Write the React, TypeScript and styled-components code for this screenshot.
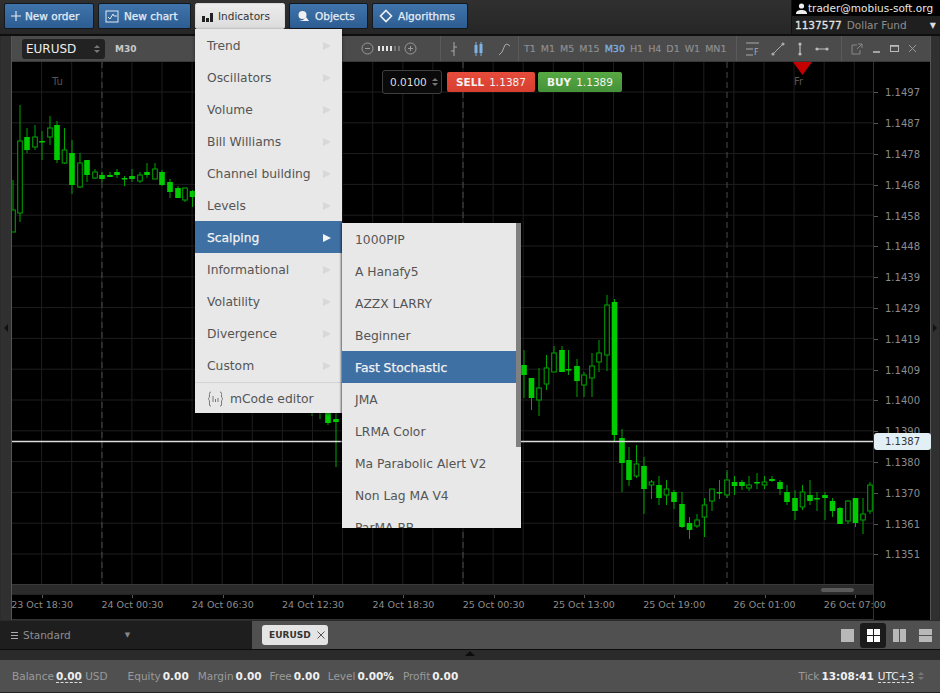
import React from "react";
import styled, { createGlobalStyle } from "styled-components";

const Global = createGlobalStyle`
  html, body { margin: 0; padding: 0; width: 940px; height: 693px; overflow: hidden; background: #333; }
  body, button { font-family: "DejaVu Sans", Verdana, sans-serif; }
  * { box-sizing: border-box; }
`;

const Page = styled.div`
  position: relative;
  width: 940px;
  height: 693px;
  display: flex;
  flex-direction: column;
  background: #2c2c2c;
`;

/* ---------- top bar ---------- */
const TopBar = styled.div`
  height: 36px;
  flex: none;
  display: flex;
  justify-content: space-between;
  background: linear-gradient(#303030, #262626);
  border-bottom: 2px solid #0e0e0e;
`;
const ToolGroup = styled.div`
  display: flex;
  gap: 4px;
  padding: 3px 0 0 4px;
`;
const ToolButton = styled.button<{ $w: number; $active?: boolean; $gap?: number }>`
  width: ${(p) => p.$w}px;
  height: 26px;
  padding: 0 0 0 6px;
  display: flex;
  align-items: center;
  gap: ${(p) => p.$gap ?? 5}px;
  font-size: 10.5px;
  font-weight: 400;
  -webkit-text-stroke: ${(p) => (p.$active ? "0" : "0.25px")};
  color: ${(p) => (p.$active ? "#333" : "#e4edf6")};
  background: ${(p) => (p.$active ? "linear-gradient(#ececec,#dcdcdc)" : "linear-gradient(#3f74ab,#2d5d92)")};
  border: 1px solid ${(p) => (p.$active ? "#d8d8d8" : "#12181f")};
  border-radius: 2px;
`;
const UserBox = styled.div`
  width: 149px;
  display: flex;
  flex-direction: column;
  background: #1f1f1f;
  border-left: 1px solid #111;
`;
const UserTop = styled.div`
  height: 16px;
  background: #000;
  color: #e8e8e8;
  font-size: 10.5px;
  display: flex;
  align-items: center;
  gap: 1px;
  padding-left: 4px;
  white-space: nowrap;
  font-weight: 400;
`;
const UserBottom = styled.div`
  flex: 1;
  display: flex;
  align-items: center;
  padding: 0 4px 0 3px;
  font-size: 10.5px;
  color: #8d8d8d;
  gap: 5px;
  white-space: nowrap;
`;
const UserId = styled.span`
  color: #e2e2e2;
  -webkit-text-stroke: 0.3px #e2e2e2;
`;
const Caret = styled.span`
  margin-left: auto;
  color: #ddd;
  font-size: 8px;
`;

/* ---------- main ---------- */
const Main = styled.div`
  flex: none;
  height: 584px;
  display: flex;
`;
const Rail = styled.div<{ $w: number }>`
  width: ${(p) => p.$w}px;
  flex: none;
  display: flex;
  align-items: center;
  justify-content: center;
  background: #303030;
  border-right: 1px solid ${(p) => (p.$w === 12 ? "#555" : "#2c2c2c")};
  border-left: 1px solid ${(p) => (p.$w === 12 ? "#2c2c2c" : "#555")};
`;
const RailArrow = styled.div<{ $left?: boolean }>`
  width: 0;
  height: 0;
  border-top: 4px solid transparent;
  border-bottom: 4px solid transparent;
  ${(p) => (p.$left ? "border-right: 4px solid #111;" : "border-left: 4px solid #111;")}
`;
const ChartWindow = styled.div`
  flex: 1;
  display: flex;
  flex-direction: column;
  background: #000;
  min-width: 0;
`;
const TitleBar = styled.div`
  height: 26px;
  flex: none;
  display: flex;
  align-items: center;
  background: #4b4b4b;
  border-bottom: 1px solid #3a3a3a;
`;
const SymbolSelect = styled.div`
  margin-left: 10px;
  width: 83px;
  height: 20px;
  flex: none;
  background: #222;
  border-radius: 3px;
  color: #eee;
  font-size: 12px;
  font-weight: 400;
  display: flex;
  align-items: center;
  justify-content: space-between;
  padding: 0 5px 0 4px;
`;
const Spin = styled.span`
  display: flex;
  flex-direction: column;
  gap: 2px;
  &::before, &::after {
    content: "";
    width: 0;
    height: 0;
    border-left: 3px solid transparent;
    border-right: 3px solid transparent;
  }
  &::before { border-bottom: 3px solid #777; }
  &::after { border-top: 3px solid #777; }
`;
const TfLabel = styled.span`
  margin-left: 10px;
  font-size: 9px;
  font-weight: 700;
  color: #c9c9c9;
  width: 246px;
  flex: none;
`;
const ZoomControls = styled.div`
  width: 79px;
  display: flex;
  align-items: center;
  gap: 4px;
  flex: none;
`;
const ZoomTick = styled.i<{ $on: boolean }>`
  width: 2px;
  height: 5px;
  background: ${(p) => (p.$on ? "#e4e4e4" : "#777")};
`;
const ZoomTicks = styled.div`
  display: flex;
  gap: 2px;
`;
const Section = styled.div<{ $w: number; $gap?: number; $pad?: number }>`
  width: ${(p) => p.$w}px;
  flex: none;
  height: 25px;
  display: flex;
  align-items: center;
  gap: ${(p) => p.$gap ?? 0}px;
  padding-left: ${(p) => p.$pad ?? 0}px;
  border-left: 1px solid #5a5a5a;
`;
const Tf = styled.span<{ $active?: boolean }>`
  font-size: 9.5px;
  color: ${(p) => (p.$active ? "#7fb1e3" : "#8f8f8f")};
  -webkit-text-stroke: ${(p) => (p.$active ? "0.3px" : "0.15px")};
`;
const ChartGrid = styled.div`
  flex: 1;
  display: grid;
  grid-template-columns: 861px 57px;
  grid-template-rows: 522px 10px 1fr;
  min-height: 0;
`;
const Plot = styled.div`
  position: relative;
  grid-column: 1;
  grid-row: 1;
  background: #000;
  overflow: hidden;
`;
const PriceAxis = styled.div`
  grid-column: 2;
  grid-row: 1 / span 3;
  background: #000;
  border-left: 1px solid #333;
  position: relative;
  padding-top: 15.5px;
  display: flex;
  flex-direction: column;
`;
const PriceRow = styled.div`
  height: 30.8px;
  flex: none;
  display: flex;
  align-items: center;
  padding-left: 11px;
  font-size: 10px;
  color: #8c8c8c;
  &::before {
    content: "";
    position: absolute;
    left: 0;
    width: 4px;
    height: 1px;
    background: #555;
  }
`;
const PriceTag = styled.div`
  position: absolute;
  left: 0;
  top: 371px;
  width: 57px;
  height: 17px;
  border-radius: 3px;
  background: #e2f0f6;
  color: #333;
  font-size: 10px;
  display: flex;
  align-items: center;
  padding-left: 11px;
`;
const ScrollTrack = styled.div`
  grid-column: 1;
  grid-row: 2;
  background: #2b2b2b;
  border-top: 1px solid #3a3a3a;
  display: flex;
  align-items: center;
  justify-content: flex-end;
  padding-right: 19px;
`;
const ScrollThumb = styled.div`
  width: 33px;
  height: 4px;
  border-radius: 2px;
  background: #5b5b5b;
`;
const TimeAxis = styled.div`
  grid-column: 1;
  grid-row: 3;
  position: relative;
  z-index: 1;
  display: flex;
  gap: 30px;
  background: #000;
  border-top: 1px solid #222;
  border-bottom: 1px solid #333;
`;
const TimeLabel = styled.div`
  width: 60.3px;
  flex: none;
  display: flex;
  justify-content: center;
  font-size: 9.5px;
  color: #8c8c8c;
  padding-top: 4px;
  white-space: nowrap;
  position: relative;
  &::before {
    content: "";
    position: absolute;
    top: 0;
    left: 50%;
    width: 1px;
    height: 3px;
    background: #555;
  }
`;
const DayLabel = styled.span<{ $x: number }>`
  position: absolute;
  left: ${(p) => p.$x}px;
  top: 14px;
  font-size: 10px;
  color: #555;
`;
const OrderPanel = styled.div`
  position: absolute;
  left: 370px;
  top: 8px;
  display: flex;
  align-items: center;
  gap: 5px;
`;
const Lots = styled.div`
  width: 60px;
  height: 24px;
  background: #0a0a0a;
  border: 1px solid #3f3f3f;
  border-radius: 3px;
  color: #ddd;
  font-size: 10.5px;
  display: flex;
  align-items: center;
  justify-content: space-between;
  padding: 0 3px 0 7px;
`;
const TradeButton = styled.button<{ $w: number; $buy?: boolean }>`
  width: ${(p) => p.$w}px;
  height: 20px;
  margin-right: ${(p) => (p.$buy ? 0 : -2)}px;
  border: none;
  border-radius: 2px;
  padding: 0;
  font-size: 10.5px;
  color: #f2f2f2;
  white-space: nowrap;
  background: ${(p) => (p.$buy ? "linear-gradient(#57a943,#45923a)" : "linear-gradient(#e64c3b,#d63e2f)")};
`;
const TradeSide = styled.b`
  margin-right: 5px;
`;

/* ---------- bottom ---------- */
const TabsRow = styled.div`
  flex: none;
  height: 30px;
  display: flex;
  background: #505050;
  border-top: 1px solid #2a2a2a;
  border-bottom: 1px solid #0c0c0c;
`;
const Workspace = styled.div`
  width: 252px;
  background: #1e1e1e;
  color: #8e8e8e;
  font-size: 10.5px;
  display: flex;
  align-items: center;
  padding-left: 11px;
  gap: 5px;
`;
const WsCaret = styled.span`
  margin-left: 49px;
  font-size: 7px;
  color: #888;
`;
const Burger = styled.span`
  width: 7px;
  height: 7px;
  border-top: 1px solid #aaa;
  border-bottom: 1px solid #aaa;
  position: relative;
  &::after {
    content: "";
    position: absolute;
    left: 0;
    right: 0;
    top: 2px;
    height: 1px;
    background: #aaa;
  }
`;
const Tab = styled.div`
  margin: 4px 0 0 10px;
  width: 66px;
  height: 20px;
  background: #e4e4e4;
  border-radius: 3px;
  color: #333;
  font-size: 9px;
  font-weight: 700;
  display: flex;
  align-items: center;
  gap: 6px;
  padding-left: 7px;
`;
const Layouts = styled.div`
  margin-left: auto;
  display: flex;
  align-items: center;
  padding-right: 2px;
`;
const LayoutBtn = styled.div<{ $active?: boolean }>`
  width: 26px;
  height: 25px;
  display: flex;
  align-items: center;
  justify-content: center;
  border-radius: 3px;
  background: ${(p) => (p.$active ? "#1b1b1b" : "transparent")};
`;
const Splitter = styled.div`
  flex: none;
  height: 10px;
  background: #2a2a2a;
  display: flex;
  justify-content: center;
`;
const SplitArrow = styled.div`
  margin-top: 1px;
  width: 0;
  height: 0;
  border-left: 5px solid transparent;
  border-right: 5px solid transparent;
  border-bottom: 5px solid #0c0c0c;
`;
const StatusBar = styled.div`
  flex: none;
  height: 33px;
  display: flex;
  align-items: center;
  padding: 0 0 0 12px;
  background: #505050;
  border-bottom: 1px solid #222;
  font-size: 10.5px;
  color: #9a9a9a;
  white-space: nowrap;
`;
const Stat = styled.span<{ $ml?: number }>`
  margin-left: ${(p) => p.$ml ?? 0}px;
`;
const StatValue = styled.b`
  color: #f0f0f0;
  margin-left: 2px;
`;
const Dotted = styled.span`
  border-bottom: 1px dashed #ddd;
  color: #eee;
`;
const Right = styled.div`
  margin-left: auto;
  display: flex;
  align-items: center;
  gap: 4px;
  padding-right: 16px;
`;

/* ---------- menus ---------- */
const Menu = styled.div`
  position: absolute;
  left: 195px;
  top: 29px;
  width: 147px;
  height: 384px;
  background: #e8e8e8;
  box-shadow: 0 1px 3px rgba(0, 0, 0, 0.5);
`;
const MenuItem = styled.div<{ $active?: boolean }>`
  height: 32px;
  display: flex;
  align-items: center;
  justify-content: space-between;
  padding: 1px 11px 0 12px;
  font-size: 12.3px;
  color: ${(p) => (p.$active ? "#f2f2f2" : "#555")};
  -webkit-text-stroke: ${(p) => (p.$active ? "0.25px" : "0")};
  background: ${(p) => (p.$active ? "#3f70a4" : "transparent")};
`;
const Arrow = styled.span<{ $active?: boolean }>`
  width: 0;
  height: 0;
  border-top: 4px solid transparent;
  border-bottom: 4px solid transparent;
  border-left: 8px solid ${(p) => (p.$active ? "#f4f4f4" : "#d8d8d8")};
`;
const EditorItem = styled.div`
  height: 32px;
  margin-top: 1px;
  border-top: 1px solid #d4d4d4;
  display: flex;
  align-items: center;
  gap: 6px;
  padding-left: 12px;
  font-size: 12.3px;
  color: #555;
`;
const SubMenu = styled.div`
  position: absolute;
  left: 342px;
  top: 223px;
  width: 179px;
  height: 305px;
  background: #e8e8e8;
  overflow: hidden;
  box-shadow: -1px 0 2px rgba(0, 0, 0, 0.6);
`;
const SubThumb = styled.div`
  position: absolute;
  right: 0;
  top: 0;
  width: 5px;
  height: 224px;
  background: #808080;
`;
const SubItem = styled(MenuItem)`
  padding-left: 13px;
`;

const candles: [number, number, number, number, number, number][] = [
  [13,180,232,210,232,0],[20,105,222,141,213,0],[27,128,153,137,150,1],[35,125,150,137,147,0],[42,131,160,141,142,1],[50,116,145,128,137,0],[57,121,163,125,160,1],[64.5,128,164,150,163,0],[72,140,194,153,185,1],[80,153,188,163,187,0],[87,160,182,160,175,1],[95,169,179,172,178,0],[102,172,182,175,179,1],[110,172,177,175,177,1],[117,169,178,172,175,1],[124.5,176,186,178,179,1],[132,169,182,176,179,1],[140,172,183,175,181,0],[147,163,178,172,175,1],[155,163,178,169,179,0],[162,170,186,172,185,1],[170,179,198,182,192,1],[178,186,198,188,198,1],[185,188,202,188,200,0],[192.5,190,207,191,197,1],
  [312,400,416,405,410,1],[320,400,419,405,411,1],[328,400,425,405,423,1],[336,410,467,419,422,1],
  [524,350,398,365,375,1],[531.5,378,410,378,398,1],[539,368,416,388,400,0],[546.5,355,390,368,384,0],[554,346,372,353,372,0],[562,346,372,350,372,1],[568.5,350,375,369,370,1],[577,359,397,366,381,1],[584,372,397,375,385,0],[592,353,397,366,378,0],[599,340,372,353,362,0],[607,295,371,305,355,0],[614.5,299,442,302,435,1],[622,429,492,438,463,1],[629,447,486,460,480,1],[636.5,445,478,464,476,0],[644,457,514,466,489,1],[651.5,480,499,482,485,0],[659,476,505,485,498,1],[666.5,480,505,489,495,0],[674,490,509,492,502,1],[682,492,528,504,527,1],[689.5,517,539,523,530,1],[697,514,528,520,526,0],[704.5,498,537,505,517,0],[712,489,511,489,501,0],[719.5,480,499,492,493,1],[727,470,498,480,495,0],[734.5,476,495,482,486,1],[742,480,490,482,486,1],[749,476,491,485,488,0],[757,473,489,482,483,1],[764.5,476,489,482,485,0],[772,476,482,479,481,1],[780,480,495,482,489,1],[787,485,505,492,502,1],[795,490,520,498,511,1],[802.5,485,510,492,507,0],[810,480,505,495,501,1],[817,492,511,498,499,1],[825,492,520,495,498,1],[832.5,498,517,501,511,1],[840,507,524,508,524,1],[848,500,524,501,521,0],[855.5,498,527,498,523,1],[863,498,534,514,520,0],[870,482,514,485,511,0],
];

const vLines = Array.from({ length: 28 }, (_, i) => 41.6 + i * 30.1);
const hLines = Array.from({ length: 17 }, (_, i) => 92 + i * 30.8);
const dashed = [102, 463, 727];

const ChartDrawing = () => (
  <svg width="861" height="522" viewBox="12 62 861 522" style={{ display: "block" }}>
    {vLines.map((x) => (
      <line key={x} x1={x} x2={x} y1="62" y2="584" stroke="#1e1e1e" />
    ))}
    {hLines.map((y) => (
      <line key={y} x1="12" x2="873" y1={y} y2={y} stroke="#1e1e1e" />
    ))}
    {dashed.map((x) => (
      <line key={x} x1={x} x2={x} y1="62" y2="584" stroke="#4a4a4a" strokeDasharray="6 4" />
    ))}
    {candles.map(([x, wt, wb, bt, bb, f]) => (
      <g key={x}>
        <line x1={x} x2={x} y1={wt} y2={wb} stroke="#00a400" />
        {f ? (
          <rect x={x - 2.8} y={bt} width={5.6} height={Math.max(bb - bt, 1.5)} fill="#00cc00" />
        ) : (
          <rect x={x - 2.3} y={bt} width={4.6} height={bb - bt} fill="#000" stroke="#009a00" strokeWidth="1.1" />
        )}
      </g>
    ))}
    <line x1="12" x2="873" y1="441.5" y2="441.5" stroke="#dcdcdc" strokeWidth="1.6" />
    <polygon points="793,62 812,62 802.5,75" fill="#c40000" />
  </svg>
);

const Ico = { stroke: "#9a9a9a", fill: "none" };
const prices = ["1.1497","1.1487","1.1478","1.1468","1.1458","1.1448","1.1439","1.1429","1.1419","1.1409","1.1400","1.1390","1.1380","1.1370","1.1361","1.1351"];
const times = ["23 Oct 18:30","24 Oct 00:30","24 Oct 06:30","24 Oct 12:30","24 Oct 18:30","25 Oct 00:30","25 Oct 13:00","25 Oct 19:00","26 Oct 01:00","26 Oct 07:00"];
const tfs = ["T1","M1","M5","M15","M30","H1","H4","D1","W1","MN1"];
const indicators = ["Trend","Oscillators","Volume","Bill Williams","Channel building","Levels","Scalping","Informational","Volatility","Divergence","Custom"];
const scalping = ["1000PIP","A Hanafy5","AZZX LARRY","Beginner","Fast Stochastic","JMA","LRMA Color","Ma Parabolic Alert V2","Non Lag MA V4","ParMA BB"];

export default function App() {
  return (
    <Page>
      <Global />
      <TopBar>
        <ToolGroup>
          <ToolButton $w={90} $gap={4}>
            <svg width="10" height="10" viewBox="0 0 10 10"><path d="M5 0v10M0 5h10" stroke="#e8eef5" strokeWidth="1.1" /></svg>
            New order
          </ToolButton>
          <ToolButton $w={93}>
            <svg width="14" height="13" viewBox="0 0 14 13"><rect x="1" y="1" width="12" height="11" fill="none" stroke="#dfe9f3" /><path d="M3 7l2 2 3-5 1 2h3" fill="none" stroke="#dfe9f3" /></svg>
            New chart
          </ToolButton>
          <ToolButton $w={90} $active>
            <svg width="11" height="11" viewBox="0 0 11 11"><path d="M0 5h3v6H0zM4 7h3v4H4zM8 2h3v9H8z" fill="#222" /></svg>
            Indicators
          </ToolButton>
          <ToolButton $w={79}>
            <svg width="14" height="12" viewBox="0 0 14 12"><circle cx="6.5" cy="5" r="4" fill="#f0f0f0" /><path d="M3 11h10l-3-4-3 3z" fill="#f0f0f0" /></svg>
            Objects
          </ToolButton>
          <ToolButton $w={96}>
            <svg width="14" height="14" viewBox="0 0 14 14"><path d="M7 1.5L12.5 7 7 12.5 1.5 7z" fill="none" stroke="#f0f0f0" strokeWidth="1.6" /></svg>
            Algorithms
          </ToolButton>
        </ToolGroup>
        <UserBox>
          <UserTop>
            <svg width="11" height="11" viewBox="0 0 11 11"><circle cx="5.5" cy="3" r="2.6" fill="#eee" /><path d="M0 11c0-3 2-4 5.5-4s5.5 1 5.5 4z" fill="#eee" /></svg>
            trader@mobius-soft.org
          </UserTop>
          <UserBottom>
            <UserId>1137577</UserId> Dollar Fund
            <Caret>▼</Caret>
          </UserBottom>
        </UserBox>
      </TopBar>

      <Main>
        <Rail $w={12}><RailArrow $left /></Rail>
        <ChartWindow>
          <TitleBar>
            <SymbolSelect>EURUSD<Spin /></SymbolSelect>
            <TfLabel>M30</TfLabel>
            <ZoomControls>
              <svg width="13" height="13" viewBox="0 0 13 13"><circle cx="6.5" cy="6.5" r="5.5" {...Ico} /><path d="M4 6.5h5" stroke="#9a9a9a" /></svg>
              <ZoomTicks>
                {[1, 1, 1, 1, 0, 0].map((on, i) => <ZoomTick key={i} $on={!!on} />)}
              </ZoomTicks>
              <svg width="13" height="13" viewBox="0 0 13 13"><circle cx="6.5" cy="6.5" r="5.5" {...Ico} /><path d="M4 6.5h5M6.5 4v5" stroke="#9a9a9a" /></svg>
            </ZoomControls>
            <Section $w={78} $gap={14} $pad={8}>
              <svg width="10" height="16" viewBox="0 0 10 16"><path d="M5 1v14M2 10h3M5 6h3" stroke="#aaa" fill="none" /></svg>
              <svg width="11" height="16" viewBox="0 0 11 16"><path d="M3 1v14M8 1v14" stroke="#7fb1e3" /><rect x="1.5" y="4" width="3" height="8" fill="#7fb1e3" /><rect x="6.5" y="3" width="3" height="9" fill="#7fb1e3" /></svg>
              <svg width="14" height="14" viewBox="0 0 14 14"><path d="M1 13l3-3 3-7 2-1 3 2" stroke="#aaa" fill="none" /></svg>
            </Section>
            <Section $w={218} $gap={5} $pad={5}>
              {tfs.map((t) => <Tf key={t} $active={t === "M30"}>{t}</Tf>)}
            </Section>
            <Section $w={105} $gap={11} $pad={8}>
              <svg width="15" height="14" viewBox="0 0 15 14"><path d="M1 1h13M1 7h7M1 13h7" stroke="#aaa" fill="none" /><text x="9" y="13" fontSize="8" fill="#aaa">F</text></svg>
              <svg width="14" height="14" viewBox="0 0 14 14"><path d="M2 12L12 2" stroke="#aaa" /><circle cx="2" cy="12" r="1.6" fill="#aaa" /><circle cx="12" cy="2" r="1.6" fill="#aaa" /></svg>
              <svg width="8" height="14" viewBox="0 0 8 14"><path d="M4 1v12" stroke="#bbb" strokeWidth="1.2" /><circle cx="4" cy="2" r="1.6" fill="#bbb" /><circle cx="4" cy="12" r="1.6" fill="#bbb" /></svg>
              <svg width="14" height="6" viewBox="0 0 14 6"><path d="M1 3h12" stroke="#bbb" /><circle cx="2" cy="3" r="1.6" fill="#bbb" /><circle cx="12" cy="3" r="1.6" fill="#bbb" /></svg>
            </Section>
            <Section $w={89} $gap={9} $pad={9}>
              <svg width="12" height="12" viewBox="0 0 12 12"><path d="M9 7v4H1V2h5M6 6l5-5M7 1h4v4" stroke="#888" fill="none" /></svg>
              <svg width="9" height="10" viewBox="0 0 9 10"><path d="M1 8h7" stroke="#bbb" strokeWidth="1.6" /></svg>
              <svg width="9" height="9" viewBox="0 0 9 9"><rect x="0.5" y="1.5" width="8" height="6" fill="none" stroke="#bbb" /><path d="M0 2h9" stroke="#bbb" strokeWidth="1.5" /></svg>
              <svg width="9" height="9" viewBox="0 0 9 9"><path d="M1 1l7 7M8 1l-7 7" stroke="#999" /></svg>
            </Section>
          </TitleBar>
          <ChartGrid>
            <Plot>
              <ChartDrawing />
              <DayLabel $x={40}>Tu</DayLabel>
              <DayLabel $x={782}>Fr</DayLabel>
              <OrderPanel>
                <Lots>0.0100<Spin /></Lots>
                <TradeButton $w={88}><TradeSide>SELL</TradeSide>1.1387</TradeButton>
                <TradeButton $w={84} $buy><TradeSide>BUY</TradeSide>1.1389</TradeButton>
              </OrderPanel>
            </Plot>
            <PriceAxis>
              {prices.map((p) => <PriceRow key={p}>{p}</PriceRow>)}
              <PriceTag>1.1387</PriceTag>
            </PriceAxis>
            <ScrollTrack><ScrollThumb /></ScrollTrack>
            <TimeAxis>
              {times.map((t) => <TimeLabel key={t}>{t}</TimeLabel>)}
            </TimeAxis>
          </ChartGrid>
        </ChartWindow>
        <Rail $w={10}><RailArrow /></Rail>
      </Main>

      <TabsRow>
        <Workspace><Burger />Standard<WsCaret>▼</WsCaret></Workspace>
        <Tab>EURUSD
          <svg width="8" height="8" viewBox="0 0 8 8"><path d="M0.5 0.5l7 7M7.5 0.5l-7 7" stroke="#555" /></svg>
        </Tab>
        <Layouts>
          <LayoutBtn>
            <svg width="13" height="13"><rect width="13" height="13" fill="#b8b8b8" /></svg>
          </LayoutBtn>
          <LayoutBtn $active>
            <svg width="13" height="13"><path d="M0 0h6v6H0zM7 0h6v6H7zM0 7h6v6H0zM7 7h6v6H7z" fill="#fff" /></svg>
          </LayoutBtn>
          <LayoutBtn>
            <svg width="13" height="13"><path d="M0 0h6v13H0zM7 0h6v13H7z" fill="#b8b8b8" /></svg>
          </LayoutBtn>
          <LayoutBtn>
            <svg width="13" height="13"><path d="M0 0h13v6H0zM0 7h13v6H0z" fill="#b8b8b8" /></svg>
          </LayoutBtn>
        </Layouts>
      </TabsRow>
      <Splitter><SplitArrow /></Splitter>
      <StatusBar>
        <Stat>Balance<StatValue><Dotted>0.00</Dotted></StatValue> USD</Stat>
        <Stat $ml={20}>Equity<StatValue>0.00</StatValue></Stat>
        <Stat $ml={9}>Margin<StatValue>0.00</StatValue></Stat>
        <Stat $ml={8}>Free<StatValue>0.00</StatValue></Stat>
        <Stat $ml={8}>Level<StatValue>0.00%</StatValue></Stat>
        <Stat $ml={9}>Profit<StatValue>0.00</StatValue></Stat>
        <Right>
          <Stat>Tick<StatValue>13:08:41</StatValue></Stat>
          <Dotted>UTC+3</Dotted>
          <Spin />
        </Right>
      </StatusBar>

      <Menu>
        {indicators.map((t) => (
          <MenuItem key={t} $active={t === "Scalping"}>
            {t}<Arrow $active={t === "Scalping"} />
          </MenuItem>
        ))}
        <EditorItem>
          <svg width="17" height="16" viewBox="0 0 17 16"><path d="M4 1C2 1 2.5 3 2.5 5S1 8 1 8s1.5 0 1.5 3S2 15 4 15M13 1c2 0 1.5 2 1.5 4S16 8 16 8s-1.5 0-1.5 3 .5 4-1.5 4M6 5v6M8.500 8v3M11 7v4" fill="none" stroke="#777" /></svg>
          mCode editor
        </EditorItem>
      </Menu>
      <SubMenu>
        {scalping.map((t) => (
          <SubItem key={t} $active={t === "Fast Stochastic"}>{t}</SubItem>
        ))}
        <SubThumb />
      </SubMenu>
    </Page>
  );
}
